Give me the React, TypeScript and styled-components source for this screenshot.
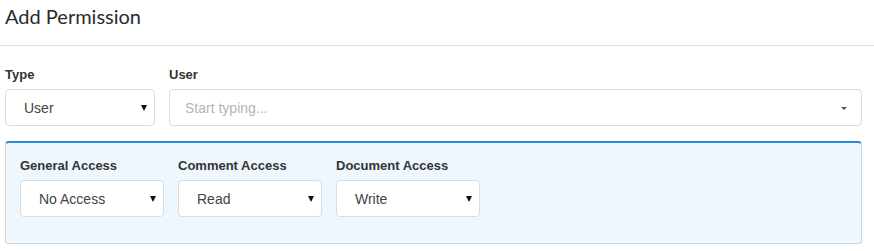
import styled, { createGlobalStyle } from "styled-components";

const GlobalStyle = createGlobalStyle`
    * { box-sizing: border-box; }
    body {
        margin: 0;
        background: #fff;
        font-family: "Liberation Sans", Arial, sans-serif;
        color: #333;
    }
`;

const Header = styled.div`
    height: 46px;
    padding: 4px 0 0 5px;
    border-bottom: 1px solid #dedede;
`;

const Title = styled.h2`
    margin: 0;
    font-family: Lato, "Liberation Sans", sans-serif;
    font-size: 20px;
    line-height: 24px;
    font-weight: 400;
    color: #2b2b2b;
`;

const Body = styled.div`
    padding: 21px 12px 0 5px;
`;

const Row = styled.div`
    display: flex;
    gap: 14px;
`;

const Field = styled.div<{ $width?: number }>`
    display: flex;
    flex-direction: column;
    ${(p) => (p.$width ? `width: ${p.$width}px;` : "flex: 1;")}
`;

const Label = styled.label`
    font-size: 13px;
    font-weight: 700;
    line-height: 16px;
    margin-bottom: 6px;
    color: #333;
`;

const SelectBox = styled.div`
    position: relative;
    height: 37px;
    background: #fff;
    border: 1px solid #dcdcdc;
    border-radius: 4px;
    display: flex;
    align-items: center;
    padding-left: 18px;
    font-size: 14px;
    color: #444;
`;

const Placeholder = styled.span`
    color: #b4b4b4;
    margin-left: -3px;
`;

const Caret = styled.span<{ $muted?: boolean }>`
    position: absolute;
    top: 50%;
    right: ${(p) => (p.$muted ? 14 : 7)}px;
    margin-top: ${(p) => (p.$muted ? -1 : -3)}px;
    width: 0;
    height: 0;
    border-left: 3px solid transparent;
    border-right: 3px solid transparent;
    border-top: ${(p) => (p.$muted ? 3 : 6)}px solid ${(p) => (p.$muted ? "#555" : "#111")};
`;

const Panel = styled.div`
    margin-top: 15px;
    height: 103px;
    background: #eef6fe;
    border: 1px solid #cfd7df;
    border-top: 2px solid #2a88d6;
    border-radius: 4px;
    box-shadow: 0 1px 2px rgba(0, 0, 0, 0.08);
    padding: 15px 14px 0;
`;

const access = [
    { label: "General Access", value: "No Access" },
    { label: "Comment Access", value: "Read" },
    { label: "Document Access", value: "Write" },
];

export default function App() {
    return (
        <>
            <GlobalStyle />
            <Header>
                <Title>Add Permission</Title>
            </Header>
            <Body>
                <Row>
                    <Field $width={150}>
                        <Label>Type</Label>
                        <SelectBox>
                            User
                            <Caret />
                        </SelectBox>
                    </Field>
                    <Field>
                        <Label>User</Label>
                        <SelectBox>
                            <Placeholder>Start typing...</Placeholder>
                            <Caret $muted />
                        </SelectBox>
                    </Field>
                </Row>
                <Panel>
                    <Row>
                        {access.map((a) => (
                            <Field key={a.label} $width={144}>
                                <Label>{a.label}</Label>
                                <SelectBox>
                                    {a.value}
                                    <Caret />
                                </SelectBox>
                            </Field>
                        ))}
                    </Row>
                </Panel>
            </Body>
        </>
    );
}
